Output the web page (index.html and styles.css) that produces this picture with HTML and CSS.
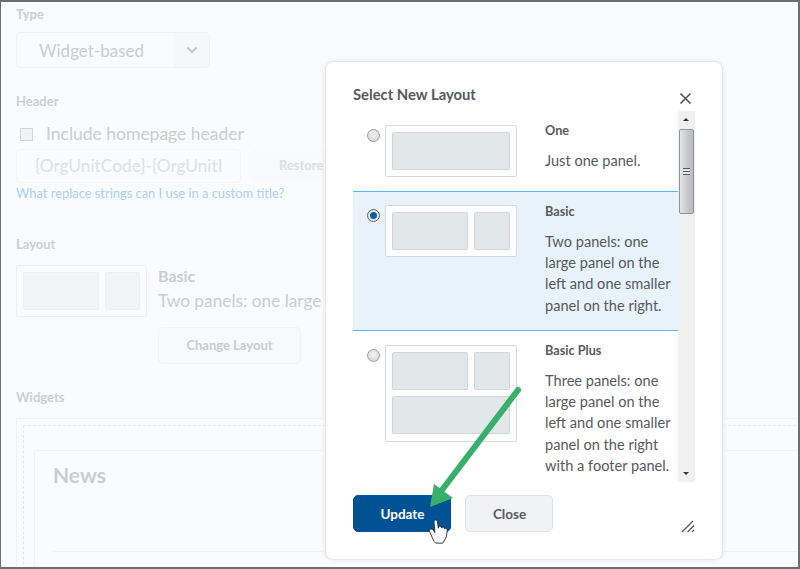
FILE: index.html
```html
<!DOCTYPE html>
<html lang="en">
<head>
  <meta charset="UTF-8" />
  <title>Select New Layout</title>
  <link rel="stylesheet" href="styles.css">
</head>
<body>
  <!-- Page behind the dialog -->
  <main class="page">
    <div class="label label-type">Type</div>
    <div class="select">
      <span class="select-text">Widget-based</span>
      <span class="select-arrow">
        <svg width="12" height="8" viewBox="0 0 12 8"><path d="M1.5 1.5 6 6l4.500-4.500" fill="none" stroke="#c4c6c9" stroke-width="2"/></svg>
      </span>
    </div>

    <div class="label label-header">Header</div>
    <div class="check-row"><span class="checkbox"></span>Include homepage header</div>
    <div class="title-row">
      <div class="title-input">{OrgUnitCode}-{OrgUnitI</div>
      <div class="restore">Restore</div>
    </div>
    <a class="help-link">What replace strings can I use in a custom title?</a>

    <div class="label label-layout">Layout</div>
    <div class="layout-row">
      <div class="page-thumb">
        <span class="page-panel wide"></span>
        <span class="page-panel narrow"></span>
      </div>
      <div class="layout-info">
        <div class="layout-name">Basic</div>
        <div class="layout-desc">Two panels: one large</div>
        <div class="change-btn">Change Layout</div>
      </div>
    </div>

    <div class="label label-widgets">Widgets</div>
    <div class="widgets">
      <div class="dashed">
        <div class="news">
          <h2>News</h2>
          <hr>
        </div>
      </div>
    </div>
  </main>

  <!-- Dialog -->
  <section class="dialog">
    <div class="dialog-head">
      <h1>Select New Layout</h1>
      <svg class="close" width="13" height="13" viewBox="0 0 13 13"><path d="M1.500 1.500l10 10M11.500 1.500l-10 10" stroke="#55585b" stroke-width="1.700" fill="none"/></svg>
    </div>
    <div class="list-wrap">
      <div class="list">
        <div class="option option-one">
          <span class="radio"></span>
          <div class="thumb">
            <span class="panel full"></span>
          </div>
          <div class="option-text">
            <h3>One</h3>
            <p>Just one panel.</p>
          </div>
        </div>
        <div class="option option-basic selected">
          <span class="radio on"></span>
          <div class="thumb">
            <span class="panel large"></span>
            <span class="panel small"></span>
          </div>
          <div class="option-text">
            <h3>Basic</h3>
            <p>Two panels: one large panel on the left and one smaller panel on the right.</p>
          </div>
        </div>
        <div class="option option-plus">
          <span class="radio"></span>
          <div class="thumb thumb-tall">
            <span class="panel large"></span>
            <span class="panel small"></span>
            <span class="panel full"></span>
          </div>
          <div class="option-text">
            <h3>Basic Plus</h3>
            <p>Three panels: one large panel on the left and one smaller panel on the right with a footer panel.</p>
          </div>
        </div>
      </div>
      <div class="scrollbar">
        <span class="scroll-up"></span>
        <div class="scroll-thumb"><span class="grip"></span></div>
        <span class="scroll-down"></span>
      </div>
    </div>
    <div class="dialog-foot">
      <button class="btn primary">Update</button>
      <button class="btn">Close</button>
      <svg class="resize" width="14" height="14" viewBox="0 0 14 14"><path d="M1 13 12 2M6.500 13 13 6.500M11 13l2-2" stroke="#55585b" stroke-width="1.300" fill="none"/></svg>
    </div>
  </section>

  <!-- Annotation drawn over the screenshot -->
  <svg class="annotation" width="800" height="569" viewBox="0 0 800 569">
    <path d="M518 390 442 490" stroke="#36b06b" stroke-width="6" stroke-linecap="round" fill="none"/>
    <path d="M430 507 434 484 453 498Z" fill="#36b06b"/>
    <path d="M436 543 431 532C430 529 433 528 435 530L437 533 436 521C436 518 440 518 440 521L441 528C441 525 444 525 445 528 445 526 448 526 448 529 449 527 451 528 451 531L450 538 446 545H438Z" transform="translate(-2 1) translate(436 521) scale(.88) translate(-436 -521)" fill="#fff" stroke="#222" stroke-width="1"/>
  </svg>
</body>
</html>
```

FILE: styles.css
```css
* {
  box-sizing: border-box;
}

body {
  margin: 0;
  width: 800px;
  height: 569px;
  overflow: hidden;
  position: relative;
  font-family: Lato, "Open Sans", sans-serif;
  background: #fafbfd;
}

/* Background page */
.page {
  height: 569px;
  overflow: hidden;
  padding: 4px 0 0 15px;
  border: 2px solid #6e6e6e;
  border-left-width: 1px;
  color: #cbcdd0;
}

.label {
  font-size: 13px;
  font-weight: 700;
  line-height: 16px;
  color: #cdcfd2;
}

.select {
  display: flex;
  width: 194px;
  height: 36px;
  margin-top: 10px;
  border: 1px solid #f0f1f3;
  border-radius: 5px;
}

.select-text {
  flex: 1;
  padding-left: 22px;
  font-size: 17px;
  line-height: 36px;
}

.select-arrow {
  width: 35px;
  display: flex;
  align-items: center;
  justify-content: center;
  background: #f6f7f8;
  border-radius: 0 5px 5px 0;
}

.label-header {
  margin-top: 25px;
}

.check-row {
  display: flex;
  align-items: center;
  margin-top: 12px;
  padding-left: 4px;
  font-size: 17.500px;
  line-height: 26px;
}

.checkbox {
  width: 13px;
  height: 13px;
  margin-right: 13px;
  border: 1px solid #d3d4d6;
  background: #f2f2f3;
}

.title-row {
  display: flex;
  gap: 11px;
  margin-top: 2px;
}

.title-input {
  width: 225px;
  height: 34px;
  padding-left: 18px;
  border: 1px solid #f4f5f6;
  border-radius: 5px;
  font-size: 17.300px;
  line-height: 32px;
  color: #dfe1e3;
  white-space: nowrap;
  overflow: hidden;
}

.restore {
  width: 120px;
  height: 34px;
  padding-left: 27px;
  border-radius: 5px;
  background: #f8f9fa;
  font-size: 13px;
  font-weight: 700;
  line-height: 32px;
  color: #dcdee0;
}

.help-link {
  display: block;
  margin-top: 1px;
  font-size: 12.900px;
  line-height: 18px;
  color: #aad1ef;
}

.label-layout {
  margin-top: 34px;
}

.layout-row {
  display: flex;
  margin-top: 13px;
}

.page-thumb {
  display: flex;
  gap: 6px;
  width: 131px;
  height: 52px;
  padding: 6px;
  border: 1px solid #eff0f2;
  border-radius: 2px;
  flex-shrink: 0;
}

.page-panel {
  height: 38px;
  background: #f2f4f5;
  border: 1px solid #eeeff1;
  border-radius: 2px;
}

.page-panel.wide {
  width: 77px;
}

.page-panel.narrow {
  width: 36px;
}

.layout-info {
  margin-left: 11px;
}

.layout-name {
  margin-top: 1px;
  font-size: 16px;
  font-weight: 700;
  line-height: 20px;
}

.layout-desc {
  margin-top: 4px;
  font-size: 17.300px;
  line-height: 22px;
  white-space: nowrap;
}

.change-btn {
  width: 143px;
  height: 37px;
  margin-top: 15px;
  border: 1px solid #f2f3f5;
  border-radius: 5px;
  background: #f8f9fa;
  font-size: 13px;
  font-weight: 700;
  line-height: 35px;
  text-align: center;
}

.label-widgets {
  margin-top: 25px;
}

/* runs off the right edge of the shot */
.widgets {
  margin-top: 13px;
  margin-right: -30px;
  height: 170px;
  padding: 6px;
  border: 1px solid #f0f1f3;
  border-bottom: 0;
}

.dashed {
  height: 170px;
  padding: 24px 0 0 10px;
  border: 1px dashed #e6e8ea;
  border-bottom: 0;
}

.news {
  height: 140px;
  padding: 0 18px;
  border: 1px solid #f1f2f4;
  border-bottom: 0;
}

.news h2 {
  margin: 10px 0 0;
  font-size: 21px;
  font-weight: 700;
  line-height: 28px;
  color: #cbcdd0;
}

.news hr {
  margin: 62px 0 0;
  border: 0;
  border-top: 1px solid #f0f1f3;
}

/* Dialog */
.dialog {
  position: absolute;
  left: 326px;
  top: 62px;
  width: 396px;
  height: 497px;
  padding: 0 27px;
  background: #fff;
  border-radius: 7px;
  box-shadow: 0 0 0 1px #e6e8ee, 0 0 4px 1px #e2e4ea;
  color: #565a5c;
}

.dialog-head {
  position: relative;
  height: 49px;
}

.dialog-head h1 {
  margin: 0;
  padding-top: 23px;
  font-size: 14.800px;
  font-weight: 700;
  line-height: 18px;
}

.close {
  position: absolute;
  right: 3px;
  top: 30px;
}

.list-wrap {
  display: flex;
  width: 342px;
  height: 371px;
  overflow: hidden;
}

.list {
  width: 325px;
}

.option {
  display: flex;
  padding-top: 14px;
}

.option-one {
  height: 80px;
}

.option-basic {
  height: 140px;
}

.option-plus {
  height: 151px;
}

.selected {
  padding-top: 13px;
  background: #e7f2fa;
  border-top: 1px solid #59b7f4;
  border-bottom: 1px solid #59b7f4;
}

.selected .option-text {
  padding-top: 1px;
}

.radio {
  width: 13px;
  height: 13px;
  margin: 4px 5px 0 14px;
  flex-shrink: 0;
  border-radius: 50%;
  border: 1px solid #9a9c9f;
  background: radial-gradient(circle at 50% 40%, #f4f4f4, #cfd0d2);
}

.radio.on {
  background: radial-gradient(circle, #0a5f9e 0 3px, #e4e7ea 4px);
  border-color: #5f6468;
}

.thumb {
  display: flex;
  flex-wrap: wrap;
  align-content: flex-start;
  gap: 6px;
  width: 132px;
  height: 52px;
  padding: 6px;
  flex-shrink: 0;
  background: #fff;
  border: 1px solid #d6d8da;
  border-radius: 2px;
}

.thumb-tall {
  height: 97px;
}

.panel {
  height: 38px;
  background: #e2e7ea;
  border: 1px solid #d3d6d8;
  border-radius: 2px;
}

.panel.full {
  width: 118px;
}

.panel.large {
  width: 76px;
}

.panel.small {
  width: 36px;
}

.option-text {
  width: 132px;
  margin-left: 28px;
  flex-shrink: 0;
}

.option-text h3 {
  margin: -3px 0 0;
  font-size: 12.700px;
  font-weight: 700;
  line-height: 16px;
}

.option-text p {
  margin: 12px 0 0;
  font-size: 14.600px;
  line-height: 21.200px;
}

.scrollbar {
  position: relative;
  width: 17px;
  background: #f0f0f0;
}

.scroll-up,
.scroll-down {
  position: absolute;
  left: 5px;
  border-left: 3.500px solid transparent;
  border-right: 3.500px solid transparent;
}

.scroll-up {
  top: 7px;
  border-bottom: 3.500px solid #333;
}

.scroll-down {
  bottom: 7px;
  border-top: 3.500px solid #333;
}

.scroll-thumb {
  position: absolute;
  left: 1px;
  top: 18px;
  width: 15px;
  height: 85px;
  display: flex;
  align-items: center;
  justify-content: center;
  border: 1px solid #8f9296;
  border-radius: 2px;
  background: linear-gradient(to right, #e4e5e7, #c6c7cb 60%, #b9bbbf);
}

.grip {
  width: 7px;
  height: 7px;
  background: repeating-linear-gradient(#55585b 0 1px, #e6e6e8 1px 3px);
}

.dialog-foot {
  position: relative;
  display: flex;
  gap: 14px;
  margin-top: 13px;
}

.btn {
  width: 88px;
  height: 37px;
  padding: 0 0 0 1px;
  border: 1px solid #dfe1e4;
  border-radius: 5px;
  background: #f1f2f4;
  font-family: Lato, "Open Sans", sans-serif;
  font-size: 13.500px;
  font-weight: 700;
  color: #565a5c;
}

.btn.primary {
  width: 98px;
  border-color: #005295;
  background: #005295;
  color: #fff;
}

.resize {
  position: absolute;
  right: 0;
  top: 24px;
}

.annotation {
  position: absolute;
  left: 0;
  top: 0;
  pointer-events: none;
}
```
